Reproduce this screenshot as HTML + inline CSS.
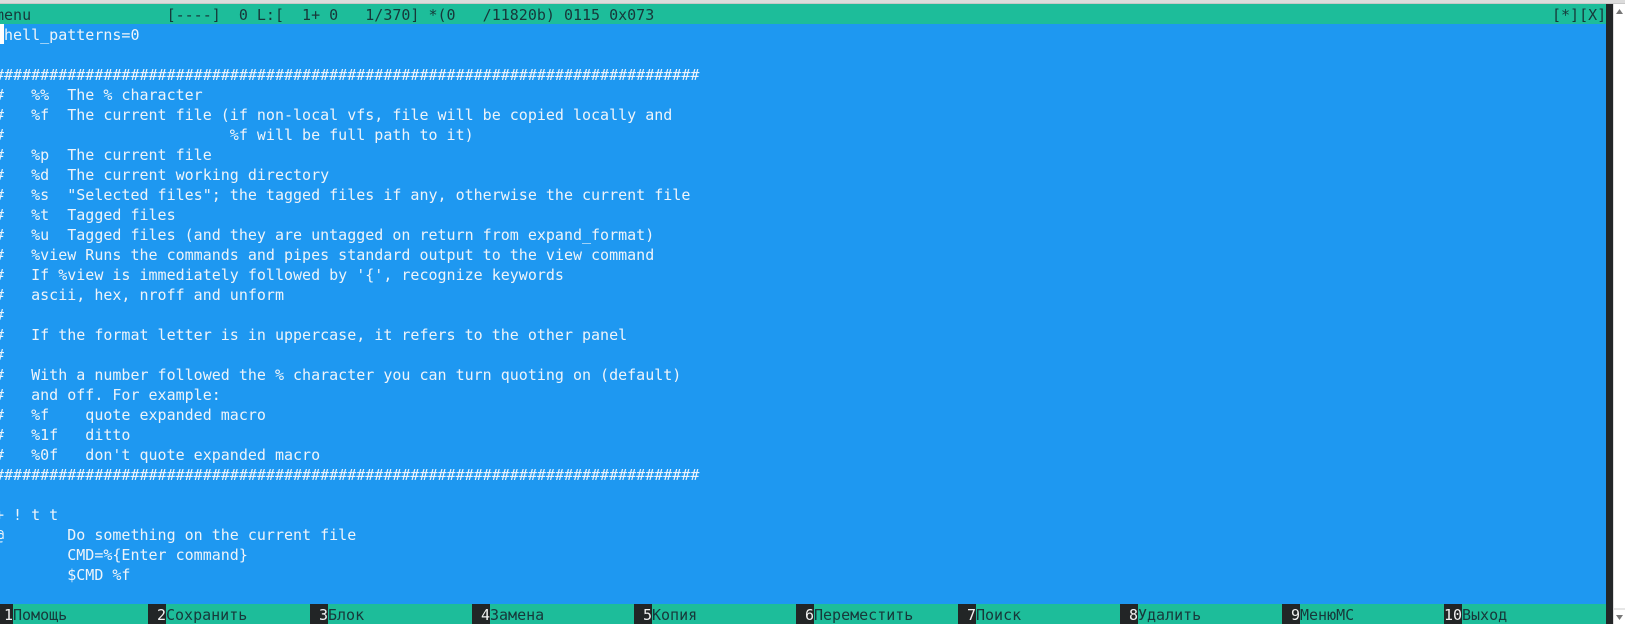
<!DOCTYPE html>
<html><head><meta charset="utf-8"><style>
html,body{margin:0;padding:0;width:1625px;height:624px;overflow:hidden;background:#fff;}
#top{position:absolute;left:0;top:0;width:1625px;height:4px;background:#dcdcdc;border-bottom:1px solid #c8c8c8;box-sizing:border-box;}
#term{position:absolute;left:0;top:4px;width:1606px;height:620px;background:#1e98f1;overflow:hidden;}
#sb{position:absolute;left:1606px;top:4px;width:7px;height:620px;background:#232627;}
#rt{position:absolute;left:1613px;top:4px;width:12px;height:620px;background:#fff;border-left:1px solid #ddd;box-sizing:border-box;}
.row{position:absolute;left:-5px;height:20px;line-height:20px;margin-top:1px;white-space:pre;font-family:"DejaVu Sans Mono","Liberation Mono",monospace;font-size:15px;color:#eef4fa;}
.bar{position:absolute;left:0;width:1606px;height:20px;background:#1dbd9a;}
.dk{color:#17383a;}
.nb{position:absolute;height:20px;line-height:20px;padding-top:1px;box-sizing:border-box;background:#222526;color:#f0f0f0;font-family:"DejaVu Sans Mono",monospace;font-size:15px;white-space:pre;}
.lb{position:absolute;height:20px;line-height:20px;margin-top:1px;color:#17383a;font-family:"DejaVu Sans Mono","Liberation Mono",monospace;font-size:15px;white-space:pre;}
#cur{position:absolute;left:0;top:24px;width:4px;height:20px;background:#fff;}
</style></head><body>
<div id="top"></div>
<div id="term">
<div class="bar" style="top:0"></div>
<div class="row dk" style="top:0">menu               [----]  0 L:[  1+ 0   1/370] *(0   /11820b) 0115 0x073</div>
<div class="row dk" style="top:0;left:1552px">[*][X]</div>
<div class="row" style="top:20px">shell_patterns=0</div>
<div class="row" style="top:60px">##############################################################################</div>
<div class="row" style="top:80px">#   %%  The % character</div>
<div class="row" style="top:100px">#   %f  The current file (if non-local vfs, file will be copied locally and</div>
<div class="row" style="top:120px">#                         %f will be full path to it)</div>
<div class="row" style="top:140px">#   %p  The current file</div>
<div class="row" style="top:160px">#   %d  The current working directory</div>
<div class="row" style="top:180px">#   %s  "Selected files"; the tagged files if any, otherwise the current file</div>
<div class="row" style="top:200px">#   %t  Tagged files</div>
<div class="row" style="top:220px">#   %u  Tagged files (and they are untagged on return from expand_format)</div>
<div class="row" style="top:240px">#   %view Runs the commands and pipes standard output to the view command</div>
<div class="row" style="top:260px">#   If %view is immediately followed by '{', recognize keywords</div>
<div class="row" style="top:280px">#   ascii, hex, nroff and unform</div>
<div class="row" style="top:300px">#</div>
<div class="row" style="top:320px">#   If the format letter is in uppercase, it refers to the other panel</div>
<div class="row" style="top:340px">#</div>
<div class="row" style="top:360px">#   With a number followed the % character you can turn quoting on (default)</div>
<div class="row" style="top:380px">#   and off. For example:</div>
<div class="row" style="top:400px">#   %f    quote expanded macro</div>
<div class="row" style="top:420px">#   %1f   ditto</div>
<div class="row" style="top:440px">#   %0f   don't quote expanded macro</div>
<div class="row" style="top:460px">##############################################################################</div>
<div class="row" style="top:500px">+ ! t t</div>
<div class="row" style="top:520px">@       Do something on the current file</div>
<div class="row" style="top:540px">        CMD=%{Enter command}</div>
<div class="row" style="top:560px">        $CMD %f</div>
<div class="bar" style="top:600px"></div>
<div class="nb" style="top:600px;left:0;width:13px;text-align:right">1</div><div class="lb" style="top:600px;left:13px">Помощь</div>
<div class="nb" style="top:600px;left:148px;width:18px;text-align:right">2</div><div class="lb" style="top:600px;left:166px">Сохранить</div>
<div class="nb" style="top:600px;left:310px;width:18px;text-align:right">3</div><div class="lb" style="top:600px;left:328px">Блок</div>
<div class="nb" style="top:600px;left:472px;width:18px;text-align:right">4</div><div class="lb" style="top:600px;left:490px">Замена</div>
<div class="nb" style="top:600px;left:634px;width:18px;text-align:right">5</div><div class="lb" style="top:600px;left:652px">Копия</div>
<div class="nb" style="top:600px;left:796px;width:18px;text-align:right">6</div><div class="lb" style="top:600px;left:814px">Переместить</div>
<div class="nb" style="top:600px;left:958px;width:18px;text-align:right">7</div><div class="lb" style="top:600px;left:976px">Поиск</div>
<div class="nb" style="top:600px;left:1120px;width:18px;text-align:right">8</div><div class="lb" style="top:600px;left:1138px">Удалить</div>
<div class="nb" style="top:600px;left:1282px;width:18px;text-align:right">9</div><div class="lb" style="top:600px;left:1300px">МенюMC</div>
<div class="nb" style="top:600px;left:1444px;width:18px;text-align:right">10</div><div class="lb" style="top:600px;left:1462px">Выход</div>
</div>
<div id="cur"></div>
<div id="sb"></div>
<div id="rt">
<svg width="12" height="620" style="position:absolute;left:0;top:0"><polygon points="2,10 9,10 5.5,5" fill="#777"/><polygon points="2,611 9,611 5.5,616" fill="#777"/><line x1="0" y1="605" x2="12" y2="605" stroke="#ccc"/></svg>
</div>
</body></html>
